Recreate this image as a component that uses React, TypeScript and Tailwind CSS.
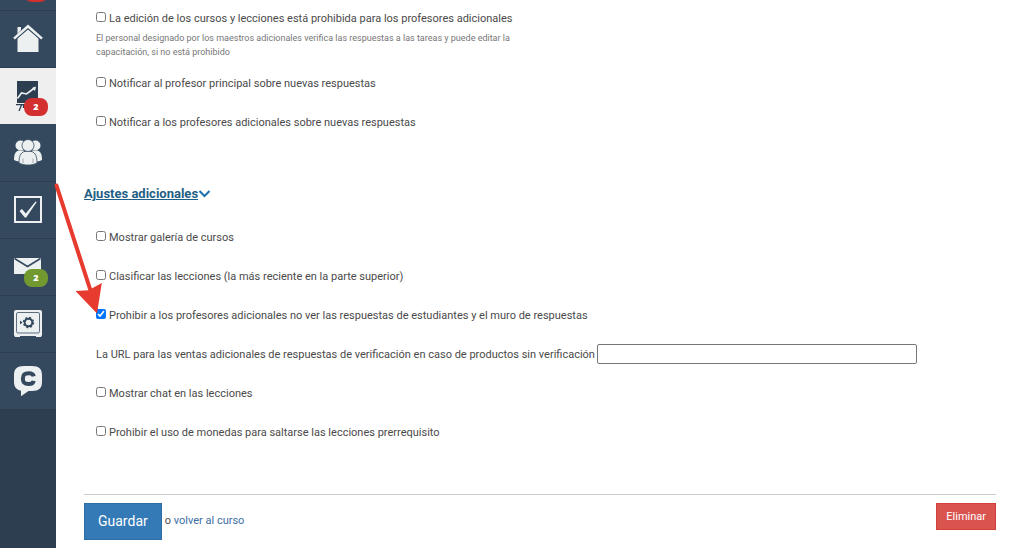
import { useState, type ReactNode } from "react";

const ICON_COLOR = "#ecf0f1";

function HomeIcon() {
  return (
    <svg width="30" height="30" viewBox="0 0 30 30" fill={ICON_COLOR}>
      <path d="M4.500 10V3H8v3z" />
      <path d="M15 5.500 25.500 14V28H4.500V14z" />
      <path d="M1.500 16.500 15 4.200l13.500 12.300" fill="none" stroke="#34495e" strokeWidth="1.200" />
      <path d="M1 14.600 15 2.200l14 12.400" fill="none" stroke={ICON_COLOR} strokeWidth="2.600" />
    </svg>
  );
}

function TrainingIcon() {
  return (
    <svg width="30" height="30" viewBox="0 0 30 30">
      <path d="M4 0h21v22H4z" fill="#2c3e50" />
      <path d="m4.500 17.500 4-5.500 5 1 4-3 4.500-3.500" fill="none" stroke={ICON_COLOR} strokeWidth="1.600" />
      <path d="m23 5.500-1 4.500-3-3z" fill={ICON_COLOR} />
      <path d="M3 23.700h22M8.500 24 6 30M10.500 24v3" fill="none" stroke="#2c3e50" strokeWidth="1.300" />
    </svg>
  );
}

function UsersIcon() {
  return (
    <svg width="30" height="30" viewBox="0 0 30 30" fill={ICON_COLOR}>
      <circle cx="7.500" cy="7.500" r="5" />
      <circle cx="22.500" cy="7.500" r="5" />
      <path d="M1 22c0-7 2-9.500 6-9.500h4V24c-4 0-7-.500-10-2zM29 22c0-7-2-9.500-6-9.500h-4V24c4 0 7-.500 10-2z" />
      <path
        d="M6 25c0-8 2-12 9-12s9 4 9 12c-5 2.700-13 2.700-18 0z"
        stroke="#34495e"
        strokeWidth=".8"
      />
      <circle cx="15" cy="7.500" r="6" stroke="#34495e" strokeWidth=".8" />
      <path d="M10 20.500V25M20 20.500V25" stroke="#34495e" strokeWidth=".4" />
    </svg>
  );
}

function TasksIcon() {
  return (
    <svg width="30" height="30" viewBox="0 0 30 30">
      <rect x="2" y="2" width="26" height="25" fill="none" stroke={ICON_COLOR} strokeWidth="2" />
      <path d="M6.500 16 9 14l3.800 4.500L22.500 6.500l1.200.5-10.500 15.500h-1.400z" fill={ICON_COLOR} />
    </svg>
  );
}

function MailIcon() {
  return (
    <svg width="30" height="30" viewBox="0 0 30 30">
      <path d="M1 6h27v16H1z" fill={ICON_COLOR} />
      <path d="m1.500 6.500 13 8 13-8" fill="none" stroke="#34495e" strokeWidth="1.500" />
    </svg>
  );
}

function SafeIcon() {
  return (
    <svg width="30" height="30" viewBox="0 0 30 30">
      <path d="M3 1h24a2 2 0 0 1 2 2v23l-1 2h-5v-1H7v1H2l-1-2V3a2 2 0 0 1 2-2z" fill={ICON_COLOR} />
      <rect x="3.500" y="3.500" width="23" height="20.500" rx="1.500" fill="none" stroke="#5d6d7e" strokeWidth="1" />
      <circle cx="15.500" cy="13.500" r="3.800" fill="none" stroke="#34495e" strokeWidth="2" />
      <circle cx="15.500" cy="13.500" r="5" fill="none" stroke="#34495e" strokeWidth="1.400" strokeDasharray="2 1.930" />
      <path d="M7 11.500v4l2.500-2z" fill="#34495e" />
    </svg>
  );
}

function ChatIcon() {
  return (
    <svg width="30" height="32" viewBox="0 0 30 32">
      <path
        d="M11 1h8c7 0 10 3 10 9v7c0 6-3 9-10 9h-3.500L8 31.200V25.700C3.500 24.800 1 22 1 17v-7c0-6 3-9 10-9z"
        fill={ICON_COLOR}
      />
      <path d="M20.700 11.300C20.300 9 18.500 8.300 15.500 8.300c-4 0-5.600 1.500-5.600 5.400s1.600 5.300 5.600 5.300c3 0 4.800-.8 5.200-3.200" fill="none" stroke="#34495e" strokeWidth="4" />
    </svg>
  );
}

type MenuItem = {
  label: string;
  icon?: ReactNode;
  badge?: string;
  badgeClass?: string;
  active?: boolean;
};

const MENU: MenuItem[] = [
  { label: "Perfil", badge: " ", badgeClass: "bg-[#d32f2f]" },
  { label: "Inicio", icon: <HomeIcon /> },
  { label: "Cursos", icon: <TrainingIcon />, badge: "2", badgeClass: "bg-[#d32f2f]", active: true },
  { label: "Usuarios", icon: <UsersIcon /> },
  { label: "Tareas", icon: <TasksIcon /> },
  { label: "Mensajes", icon: <MailIcon />, badge: "2", badgeClass: "bg-[#71992f]" },
  { label: "Ventas", icon: <SafeIcon /> },
  { label: "Chat", icon: <ChatIcon /> },
];

function Sidebar() {
  return (
    <nav className="w-14 shrink-0 overflow-hidden bg-[#2c3e50]">
      {/* the menu is scrolled a little, so the first entry is cut off */}
      <ul className="-mt-[46px]">
        {MENU.map((item) => (
          <li key={item.label}>
            <a
              href="#"
              aria-label={item.label}
              className={`relative flex h-[57px] items-center justify-center border-b ${
                item.active ? "border-[#34495e] bg-[#efefef]" : "border-[#2c3e50] bg-[#34495e]"
              }`}
            >
              {item.icon}
              {item.badge && (
                <span
                  className={`absolute top-[30px] right-2 flex h-[18px] w-6 items-center justify-center rounded-lg font-['Open_Sans',sans-serif] text-[9px] font-extrabold text-white ${item.badgeClass}`}
                >
                  {item.badge}
                </span>
              )}
            </a>
          </li>
        ))}
      </ul>
    </nav>
  );
}

function CheckRow({ id, label, defaultChecked = false }: { id: string; label: string; defaultChecked?: boolean }) {
  const [checked, setChecked] = useState(defaultChecked);
  return (
    <div className="flex items-center gap-[3px] px-3 leading-5">
      <input
        id={id}
        type="checkbox"
        checked={checked}
        onChange={(e) => setChecked(e.target.checked)}
        className="mb-1 size-[10px] shrink-0"
      />
      <label htmlFor={id}>{label}</label>
    </div>
  );
}

export default function App() {
  const [url, setUrl] = useState("");

  return (
    <div className="relative flex min-h-screen bg-white font-['Roboto','Liberation_Sans',sans-serif] text-[11px] text-[#4a4a4a]">
      <Sidebar />

      <main className="min-w-0 flex-1 pt-[9px] pr-[13px] pl-7">
        <CheckRow id="no-edit" label="La edición de los cursos y lecciones está prohibida para los profesores adicionales" />
        <p className="mt-[2px] max-w-[460px] px-3 text-[9px] leading-[14px] text-[#777]">
          El personal designado por los maestros adicionales verifica las respuestas a las tareas y puede editar la
          capacitación, si no está prohibido
        </p>

        <div className="mt-[15px] flex flex-col gap-[19px]">
          <CheckRow id="notify-main" label="Notificar al profesor principal sobre nuevas respuestas" />
          <CheckRow id="notify-extra" label="Notificar a los profesores adicionales sobre nuevas respuestas" />
        </div>

        <h2 className="mt-[51px] text-[13px] leading-5 font-bold text-[#1f5f85]">
          <a href="#" className="inline-flex items-center">
            <span className="underline">Ajustes adicionales</span>
            <svg width="13" height="8" viewBox="0 0 13 8" fill="none" stroke="#1b6fae" strokeWidth="2">
              <path d="m1.500 1 5 5 5-5" />
            </svg>
          </a>
        </h2>

        <div className="mt-6 flex flex-col gap-[19px]">
          <CheckRow id="gallery" label="Mostrar galería de cursos" />
          <CheckRow id="sort" label="Clasificar las lecciones (la más reciente en la parte superior)" />
          <CheckRow
            id="hide-answers"
            defaultChecked
            label="Prohibir a los profesores adicionales no ver las respuestas de estudiantes y el muro de respuestas"
          />
          <div className="flex h-5 items-center gap-[2px] px-3 leading-5">
            <label htmlFor="upsell-url">
              La URL para las ventas adicionales de respuestas de verificación en caso de productos sin verificación
            </label>
            <input
              id="upsell-url"
              type="text"
              value={url}
              onChange={(e) => setUrl(e.target.value)}
              className="mb-[2px] h-5 w-80 rounded-xs border border-[#767676] px-1"
            />
          </div>
          <CheckRow id="chat" label="Mostrar chat en las lecciones" />
          <CheckRow id="coins" label="Prohibir el uso de monedas para saltarse las lecciones prerrequisito" />
        </div>

        <footer className="mt-[51px] flex items-start justify-between border-t border-[#ccc] pt-2">
          <div className="flex items-center gap-[3px]">
            <button type="button" className="border border-[#2e6da4] bg-[#337ab7] px-[13px] py-2 text-[14px] leading-[19px] text-white">
              Guardar
            </button>
            <span>
              o{" "}
              <a href="#" className="text-[#3a6ea5]">
                volver al curso
              </a>
            </span>
          </div>
          <button type="button" className="border border-[#d43f3a] bg-[#d9534f] px-[9px] py-1 leading-[17px] text-white">
            Eliminar
          </button>
        </footer>
      </main>

      <svg className="pointer-events-none absolute top-[180px] left-[52px]" width="54" height="136" viewBox="52 180 54 136">
        <path d="M56.500 185.500 91 292" stroke="#e63b2e" strokeWidth="4" strokeLinecap="round" />
        <path d="M97 313.500 75.500 291l13-.8L101.800 283z" fill="#e63b2e" />
      </svg>
    </div>
  );
}
